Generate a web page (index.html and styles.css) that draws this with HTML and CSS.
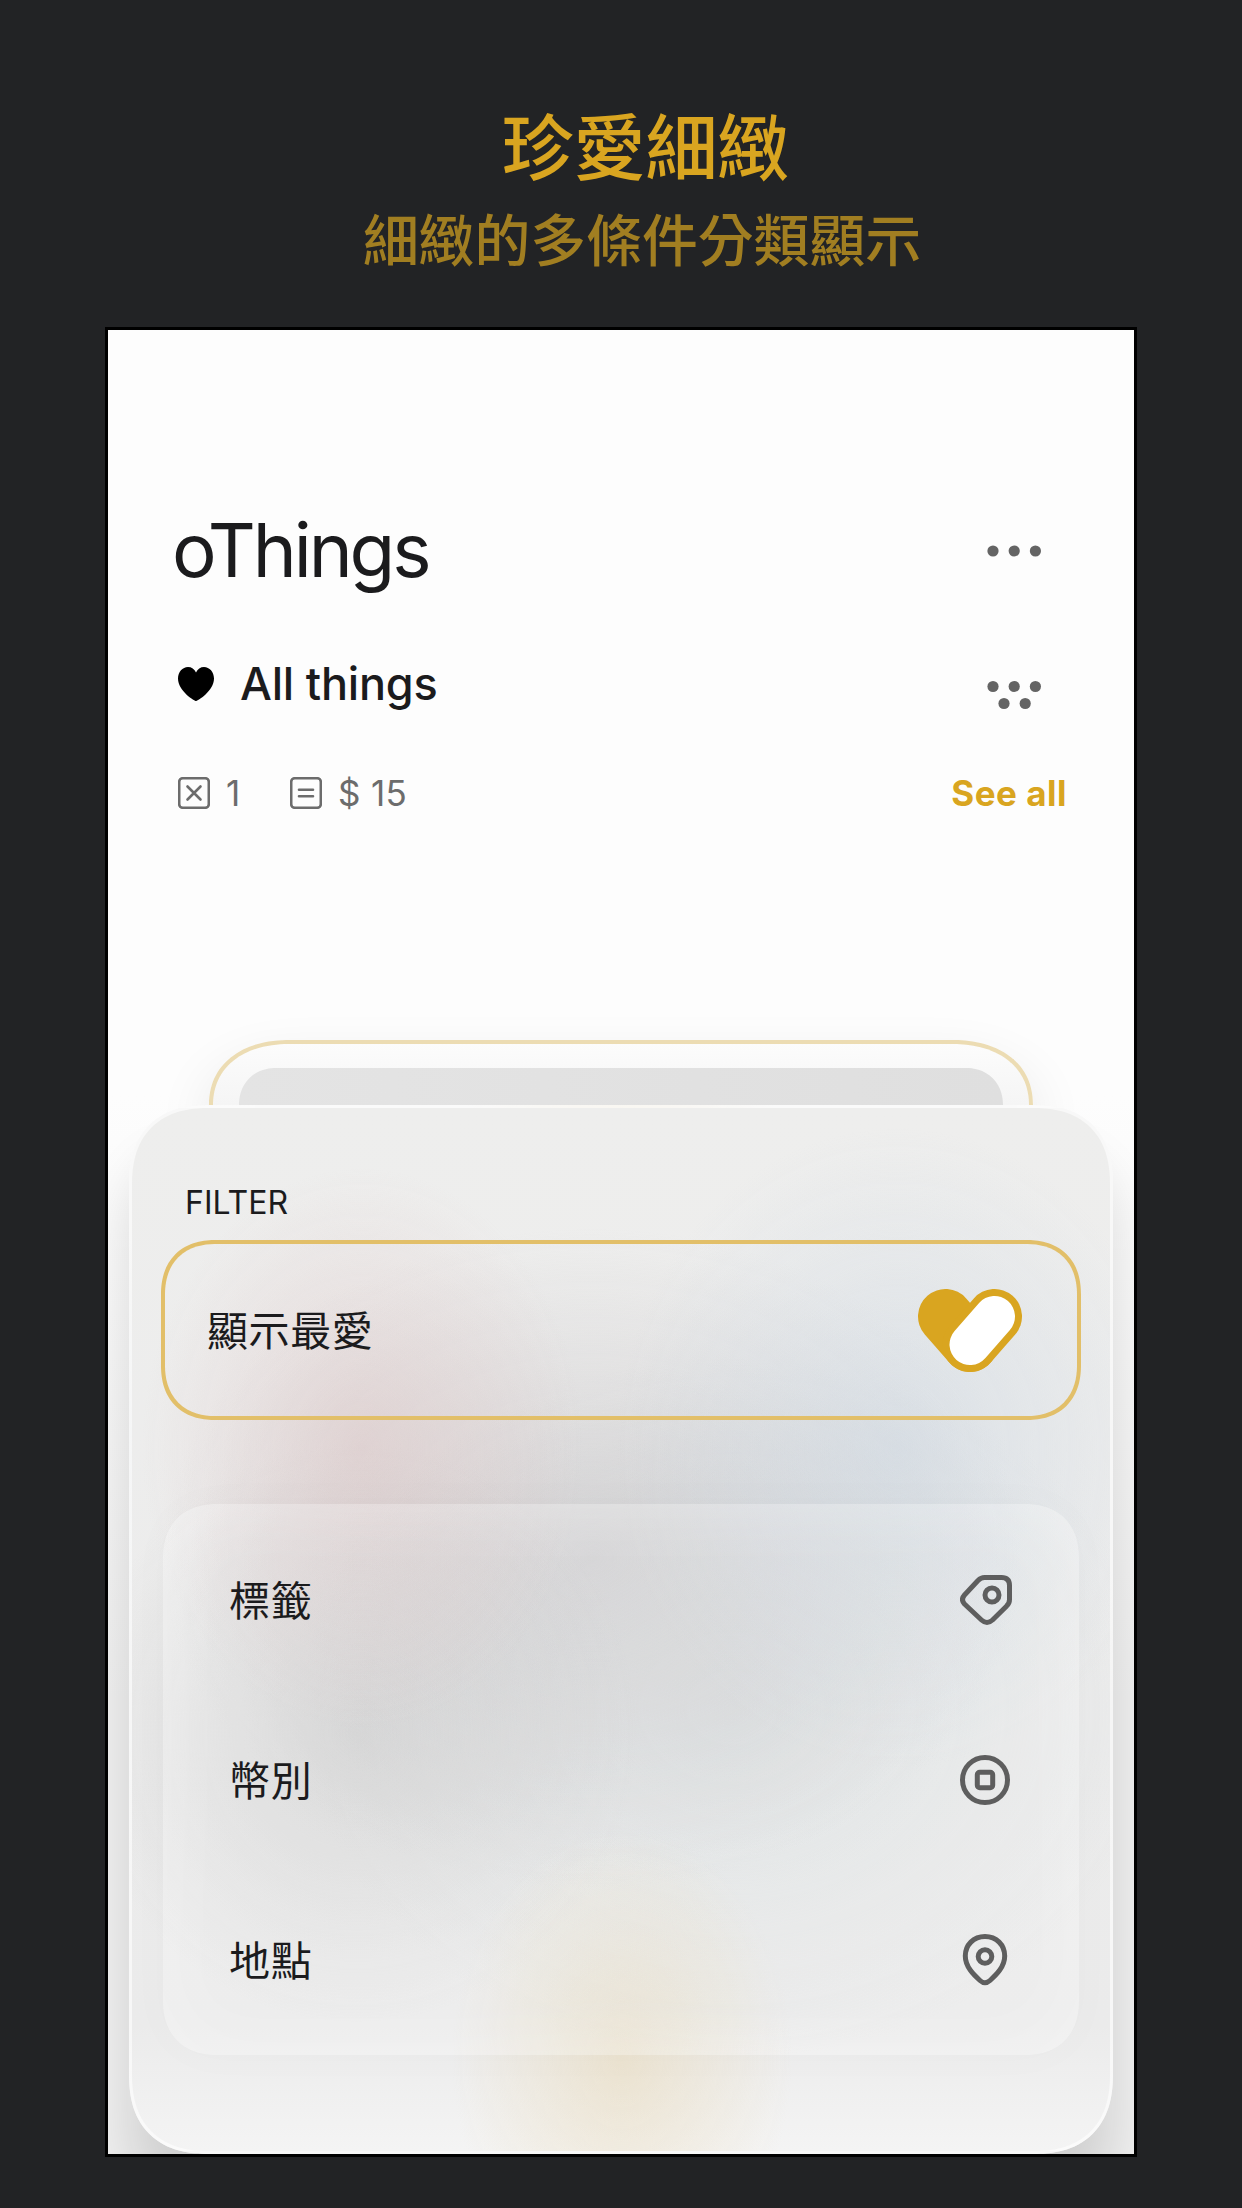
FILE: index.html
```html
<!DOCTYPE html>
<html lang="zh-Hant">
  <head>
    <meta charset="UTF-8" />
    <meta name="viewport" content="width=device-width, initial-scale=1.0" />
    <title>oThings</title>
    <link rel="stylesheet" href="styles.css">
  </head>
  <body>
    <header class="promo">
      <h1>珍愛細緻</h1>
      <p>細緻的多條件分類顯示</p>
    </header>
    <main class="screen">
      <div class="row row-app">
        <h2 class="app-name">oThings</h2>
        <svg class="dots" width="50" height="40" viewBox="0 0 50 40">
          <circle cx="7" cy="21" r="5.6" />
          <circle cx="28.2" cy="21" r="5.6" />
          <circle cx="49.4" cy="21" r="5.6" />
        </svg>
      </div>
      <div class="row row-list">
        <svg class="heart" width="36" height="34" viewBox="0 0 36 34">
          <path d="M18 34C16.500 34 0 24 0 11.500C0 5 4.500 0 10 0C13.500 0 16.500 2 18 5.500C19.500 2 22.500 0 26 0C31.500 0 36 5 36 11.500C36 24 19.500 34 18 34Z" />
        </svg>
        <h3 class="list-name">All things</h3>
        <svg class="dots" width="50" height="40" viewBox="0 0 50 40">
          <circle cx="7" cy="22.500" r="5.6" />
          <circle cx="28.2" cy="22.500" r="5.6" />
          <circle cx="49.4" cy="22.500" r="5.6" />
          <circle cx="18" cy="39.500" r="5.6" />
          <circle cx="39.2" cy="39.500" r="5.6" />
        </svg>
      </div>
      <div class="row row-stats">
        <svg class="stat-icon" width="32" height="32" viewBox="0 0 32 32">
          <rect x="1.2" y="1.2" width="29.600" height="29.600" rx="3.600" />
          <path d="M9.500 9.500L22.500 22.500M22.500 9.500L9.500 22.500" />
        </svg>
        <span class="stat stat-count">1</span>
        <svg class="stat-icon" width="32" height="32" viewBox="0 0 32 32">
          <rect x="1.2" y="1.2" width="29.600" height="29.600" rx="3.600" />
          <path d="M9 12.800H23M9 19.200H23" />
        </svg>
        <span class="stat">$ 15</span>
        <a class="see-all">See all</a>
      </div>

      <div class="card">
        <div class="card-photo"></div>
      </div>

      <section class="panel">
        <h4 class="panel-title">FILTER</h4>
        <div class="favorite">
          <span>顯示最愛</span>
          <svg width="104" height="83" viewBox="0 0 104 83">
            <path class="gold" d="M27.500 27.500L52 55.500" />
            <path class="gold" d="M76.500 27.500L52 55.500" />
            <path class="pill" d="M76.500 27.500L52 55.500" />
          </svg>
        </div>
        <ul class="options">
          <li>
            <span>標籤</span>
            <svg width="54" height="54" viewBox="0 0 54 54">
              <path d="M24.500 4.500H41.500Q49.500 4.500 49.500 12.500V26.500Q49.500 30.500 46.500 33.200L32.500 47Q27 52 21.500 47L4.500 31Q0.500 26.500 4.500 22L18 7.500Q21 4.500 24.500 4.500Z" />
              <circle cx="32" cy="22" r="7" />
            </svg>
          </li>
          <li>
            <span>幣別</span>
            <svg width="54" height="54" viewBox="0 0 54 54">
              <circle cx="25" cy="27" r="22.500" />
              <rect x="17.300" y="19.300" width="15.400" height="15.400" rx="2.500" />
            </svg>
          </li>
          <li>
            <span>地點</span>
            <svg width="54" height="54" viewBox="0 0 54 54">
              <path d="M25 3.500C36.500 3.500 44.700 12 44.700 23C44.700 34 36 42 30 47.500Q25 52 20 47.500C14 42 5.300 34 5.300 23C5.300 12 13.500 3.500 25 3.500Z" />
              <circle cx="25" cy="23.500" r="6.800" />
            </svg>
          </li>
        </ul>
      </section>
    </main>
  </body>
</html>
```

FILE: styles.css
```css
* {
  box-sizing: border-box;
  margin: 0;
  padding: 0;
}
body {
  height: 2208px;
  background: #222325;
  color: #1b1b1d;
  font-family: "Inter", "Noto Sans CJK TC", sans-serif;
  overflow: hidden;
}
.promo {
  height: 327px;
  padding: 91px 0 0 42px;
  color: #d9a520;
  text-align: center;
}
.promo h1 {
  padding-left: 7px;
  font-family: "Noto Sans CJK TC", sans-serif;
  font-size: 72px;
  line-height: 104px;
  font-weight: 500;
}
.promo p {
  font-family: "Noto Sans CJK TC", sans-serif;
  font-size: 55.8px;
  line-height: 84px;
  font-weight: 500;
  color: #a17e21;
}
.screen {
  width: 1032px;
  height: 1830px;
  margin: 0 auto;
  padding-top: 170px;
  border: 3px solid #000;
  background: linear-gradient(#fdfdfd 42%, #efefef 75%);
  overflow: hidden;
}
.row {
  display: flex;
  align-items: center;
  padding: 0 67px 0 70px;
}
.row-app {
  height: 100px;
}
.app-name {
  margin-left: -6px;
  font-size: 74.5px;
  font-weight: 400;
  letter-spacing: -3.1px;
}
.dots {
  margin-left: auto;
  margin-right: 31px;
  overflow: visible;
  fill: #646464;
}
.row-list {
  height: 100px;
  margin-top: 34px;
}
.list-name {
  margin: -2px 0 0 26px;
  font-size: 45px;
  font-weight: 500;
  letter-spacing: -0.2px;
}
.row-stats {
  height: 50px;
  margin-top: 34px;
}
.stat-icon {
  fill: none;
  stroke: #6c6c6c;
  stroke-width: 2.6;
  stroke-linecap: round;
}
.stat {
  margin-left: 16px;
  font-size: 35px;
  letter-spacing: 0.3px;
  color: #6c6c6c;
}
.stat-count {
  width: 64px;
}
.see-all {
  margin-left: auto;
  font-size: 35px;
  font-weight: 700;
  letter-spacing: 0.5px;
  color: #d9a520;
}
.card {
  width: 824px;
  height: 65px;
  margin: 222px auto 0;
  padding: 24px 26px 0;
  border: 4px solid #ecdcb3;
  border-bottom: none;
  border-radius: 76px 76px 0 0;
  background: linear-gradient(#fcfcfc, #f5f5f5);
  box-shadow: 0 30px 60px rgba(0, 0, 0, 0.12);
}
.card-photo {
  height: 100%;
  border-radius: 52px 52px 0 0;
  background: linear-gradient(90deg, #e4e4e4, #dfdfdf);
}
.panel {
  position: relative;
  width: 984px;
  height: 1049px;
  margin: 0 auto;
  padding: 68px 30px 0;
  border: 3px solid rgba(255, 255, 255, 0.6);
  border-radius: 66px;
  background:
    radial-gradient(220px 280px at 230px 340px, rgba(218, 193, 193, 0.5), rgba(218, 193, 193, 0)),
    radial-gradient(280px 320px at 765px 340px, rgba(200, 212, 224, 0.5), rgba(200, 212, 224, 0)),
    radial-gradient(170px 230px at 490px 950px, rgba(232, 215, 178, 0.5), rgba(232, 215, 178, 0)),
    radial-gradient(280px 290px at 225px 625px, rgba(180, 180, 180, 0.4), rgba(180, 180, 180, 0)),
    radial-gradient(430px 330px at 460px 450px, rgba(190, 187, 190, 0.5), rgba(190, 187, 190, 0)),
    radial-gradient(430px 350px at 600px 600px, rgba(205, 213, 215, 0.5), rgba(205, 213, 215, 0)),
    linear-gradient(#eeeeed, #ececec 60%, #ebebeb 88%, #f4f4f4);
  box-shadow: 0 50px 50px rgba(0, 0, 0, 0.13);
}
.panel-title {
  height: 63px;
  padding-left: 23px;
  font-size: 32px;
  line-height: 54px;
  font-weight: 400;
}
.favorite {
  display: flex;
  align-items: center;
  justify-content: space-between;
  height: 180px;
  margin: 1px -1px 0 -1px;
  padding: 0 55px 0 42px;
  border: 4px solid #e2bf69;
  border-radius: 50px;
  font-size: 41px;
  letter-spacing: 0.6px;
}
.favorite span {
  padding-bottom: 5px;
}
.gold {
  stroke: #d9a520;
  stroke-width: 55;
  stroke-linecap: round;
}
.pill {
  stroke: #fff;
  stroke-width: 41;
  stroke-linecap: round;
}
.options {
  height: 551px;
  margin: 84px 1px 0;
  padding: 6px 65px 0 66px;
  border-radius: 50px;
  background: rgba(255, 255, 255, 0.12);
  box-shadow:
    inset 0 0 80px rgba(255, 255, 255, 0.3),
    0 0 50px rgba(0, 0, 0, 0.02);
  list-style: none;
}
.options li {
  display: flex;
  align-items: center;
  justify-content: space-between;
  height: 180px;
  font-size: 41px;
  letter-spacing: 0.8px;
}
.options span {
  padding-bottom: 4px;
}
.options svg {
  fill: none;
  stroke: #5e5e5e;
  stroke-width: 5;
  stroke-linejoin: round;
}

/* softer, iOS-like corners */
@supports (corner-shape: superellipse(1.25)) {
  .card {
    border-radius: 122px 122px 0 0 / 98px 98px 0 0;
    corner-shape: superellipse(1.15);
  }
  .card-photo {
    border-radius: 64px 64px 0 0;
    padding-bottom: 30px;
    corner-shape: superellipse(1.1);
  }
  .panel {
    border-radius: 80px;
    corner-shape: superellipse(1.25);
  }
  .favorite,
  .options {
    border-radius: 55px;
    corner-shape: superellipse(1.2);
  }
}
```
